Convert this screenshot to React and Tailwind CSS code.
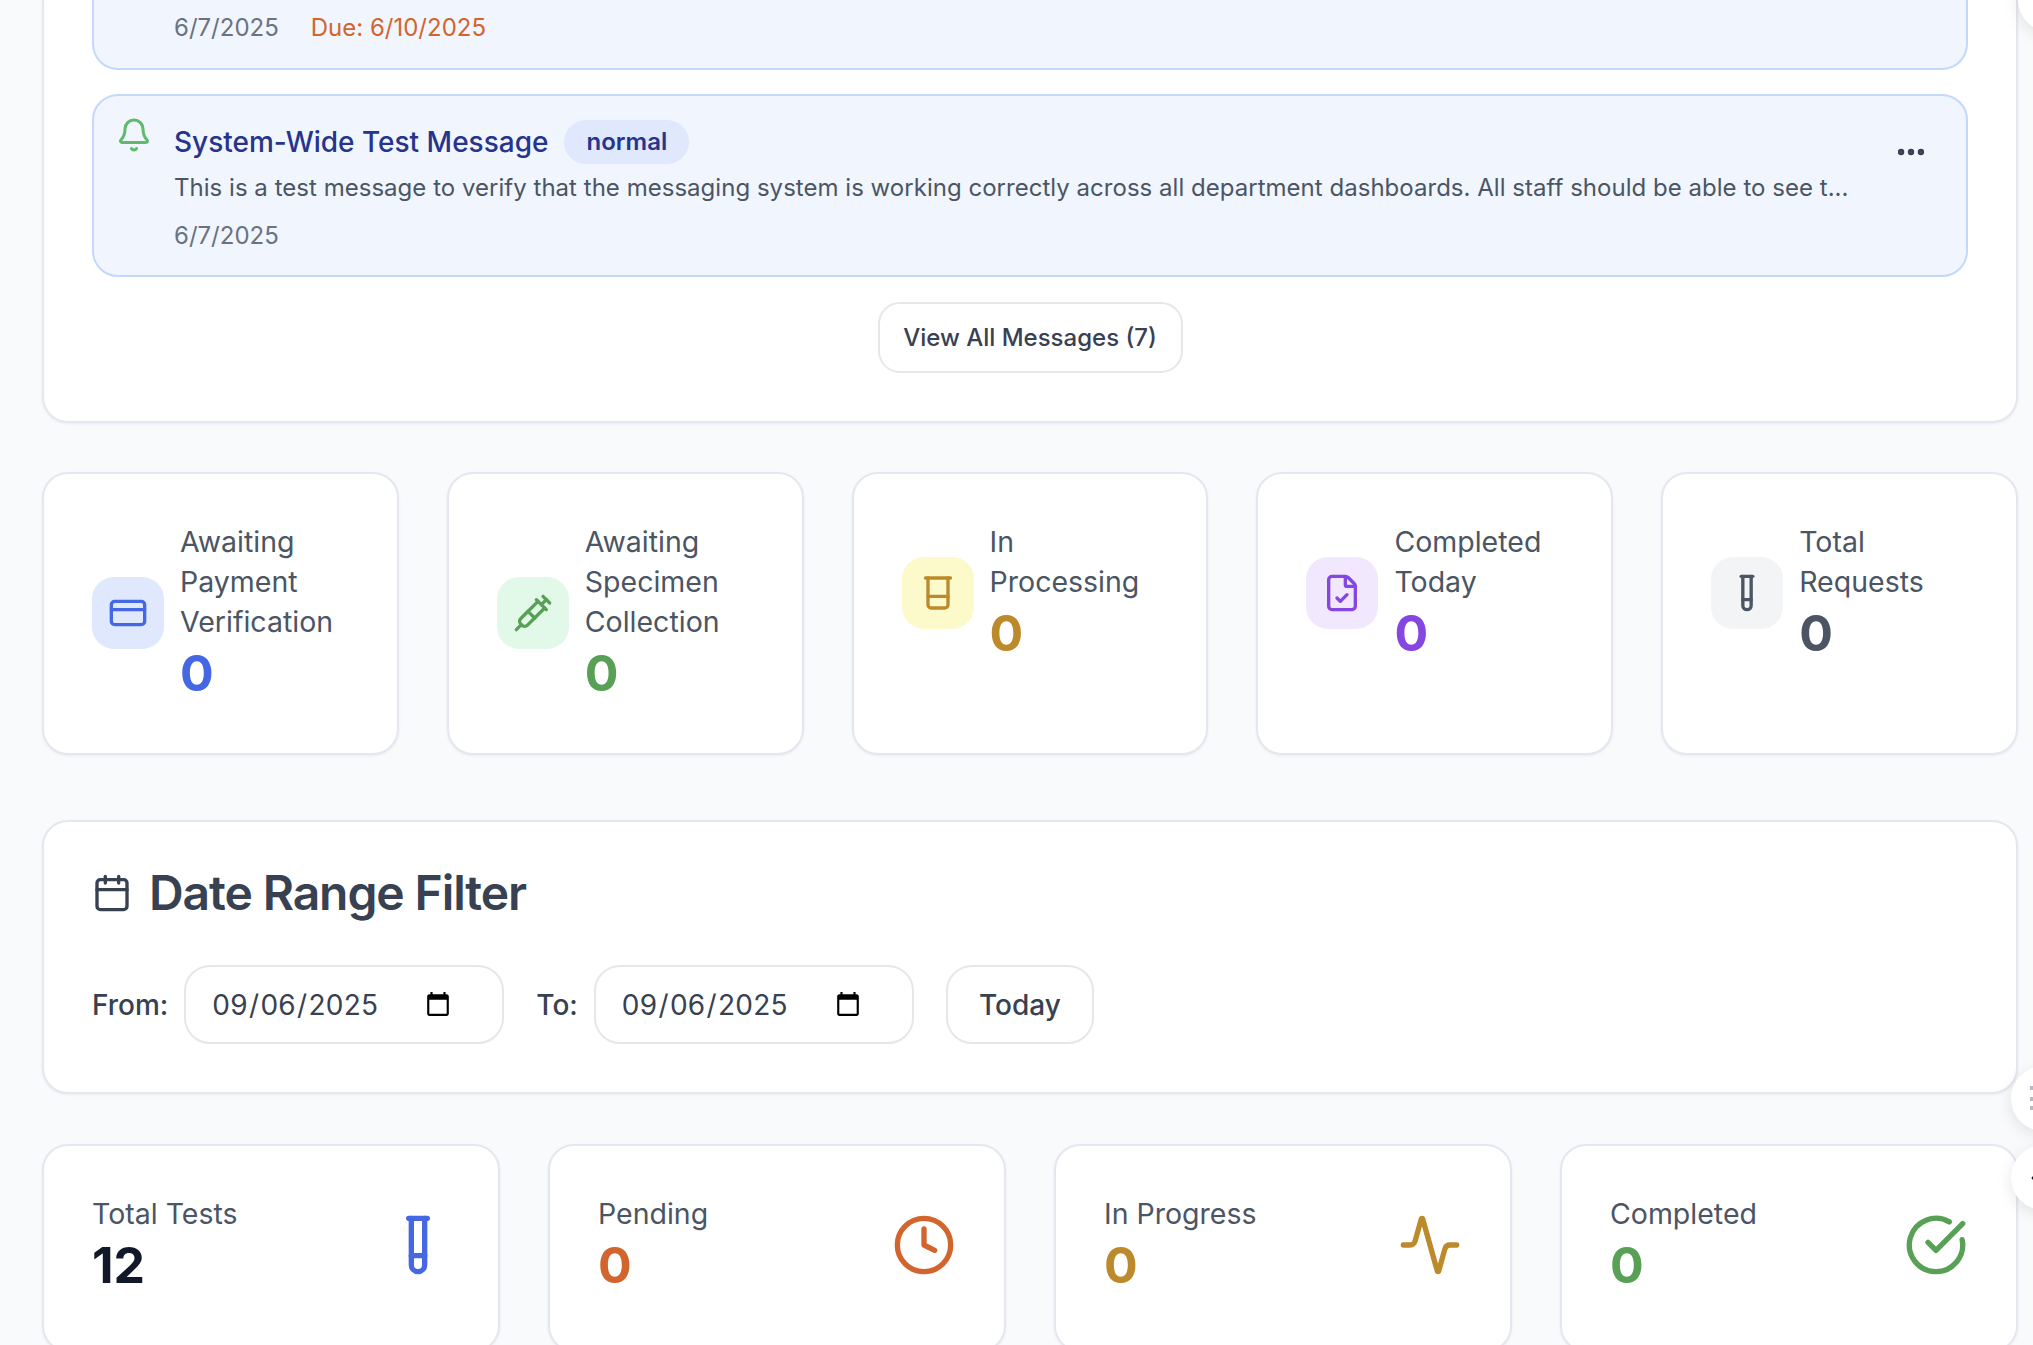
import React from "react";
import { Bell, Ellipsis, CreditCard, Syringe, Beaker, FileCheck, TestTube, Calendar, Clock, Activity, CircleCheckBig, ArrowLeft } from "lucide-react";

const font = { fontFamily: "Inter, sans-serif" };

const stats = [
  { label: ["Awaiting", "Payment", "Verification"], Icon: CreditCard, bg: "bg-[#dfe8fc]", color: "text-[#4667e4]" },
  { label: ["Awaiting", "Specimen", "Collection"], Icon: Syringe, bg: "bg-[#e2f8e8]", color: "text-[#57a055]" },
  { label: ["In", "Processing"], Icon: Beaker, bg: "bg-[#fcf9ca]", color: "text-[#bd8a2b]" },
  { label: ["Completed", "Today"], Icon: FileCheck, bg: "bg-[#f1e8fd]", color: "text-[#8646e2]" },
  { label: ["Total", "Requests"], Icon: TestTube, bg: "bg-[#f3f4f6]", color: "text-[#4b5563]" },
];

const tiles = [
  { label: "Total Tests", value: "12", Icon: TestTube, valueColor: "text-[#111827]", color: "text-[#4667e4]" },
  { label: "Pending", value: "0", Icon: Clock, valueColor: "text-[#d2652d]", color: "text-[#d2652d]" },
  { label: "In Progress", value: "0", Icon: Activity, valueColor: "text-[#bd8a2b]", color: "text-[#bd8a2b]" },
  { label: "Completed", value: "0", Icon: CircleCheckBig, valueColor: "text-[#57a055]", color: "text-[#57a055]" },
];

const card = "bg-white border-2 border-[#e5e7f0] rounded-[26px] shadow-[0_1px_3px_rgba(0,0,0,0.06)]";
const fab = "absolute w-[65px] h-[65px] rounded-full bg-white shadow-[0_4px_16px_rgba(0,0,0,0.1)] flex items-center";

function DateInput() {
  return (
    <input
      type="date"
      defaultValue="2025-09-06"
      className="w-[320px] h-[79px] rounded-[26px] border-2 border-[#e5e7eb] bg-white pl-[25px] pr-[48px] text-[28px] tracking-[0.3px] text-[#374151] outline-none"
    />
  );
}

export default function App() {
  return (
    <div style={font} className="relative h-[1345px] overflow-hidden bg-[#f9fafc] pl-[42px] pr-[15px]">
      <section className={`${card} border-t-0 rounded-t-none px-[48px] pb-[48px] h-[423px]`}>
        <div className="h-[70px] rounded-b-[26px] border-2 border-t-0 border-[#c3d8fb] bg-[#f0f5fe] pl-[80px] flex items-start pt-[10px] gap-[32px] text-[24px] leading-[36px]">
          <span className="text-[#6b7280]">6/7/2025</span>
          <span className="text-[#d2652d]">Due: 6/10/2025</span>
        </div>
        <div className="mt-[24px] h-[183px] rounded-[26px] border-2 border-[#c3d8fb] bg-[#f0f5fe] flex pl-[22px] pr-[38px] pt-[21px] gap-[22px]">
          <Bell className="w-[36px] h-[36px] text-[#5fbb6b] shrink-0" strokeWidth={2} />
          <div className="flex-1 min-w-0 pt-[3px]">
            <div className="flex items-center gap-[16px] h-[44px]">
              <span className="text-[28px] font-medium text-[#27348b]">System-Wide Test Message</span>
              <span className="rounded-full bg-[#dfe8fc] px-[22px] h-[44px] flex items-center text-[24px] font-semibold text-[#27348b]">normal</span>
            </div>
            <p className="mt-[4px] text-[24px] tracking-[0.026px] leading-[40px] text-[#4b5563] whitespace-nowrap">
              This is a test message to verify that the messaging system is working correctly across all department dashboards. All staff should be able to see t...
            </p>
            <p className="mt-[10px] text-[24px] leading-[36px] text-[#6b7280]">6/7/2025</p>
          </div>
          <Ellipsis className="w-[34px] h-[34px] text-[#374151] shrink-0 mt-[18px]" strokeWidth={2.5} />
        </div>
        <div className="flex justify-center mt-[25px]">
          <button className="h-[71px] w-[305px] rounded-[22px] border-2 border-[#e5e7eb] bg-white text-[24px] font-medium text-[#374151]">
            View All Messages (7)
          </button>
        </div>
      </section>

      <div className="grid grid-cols-5 gap-[48px] mt-[49px]">
        {stats.map(({ label, Icon, bg, color }) => (
          <div key={label.join()} className={`${card} h-[283px] p-[48px]`}>
            <div className="flex items-center gap-[16px]">
              <div className={`w-[72px] h-[72px] rounded-[22px] flex items-center justify-center shrink-0 ${bg}`}>
                <Icon className={`w-[40px] h-[40px] ${color}`} strokeWidth={2} />
              </div>
              <div>
                <div className="text-[28.5px] leading-[40px] text-[#4b5563]">
                  {label.map((l) => <div key={l}>{l}</div>)}
                </div>
                <div className={`text-[50px] leading-[62px] font-bold ${color}`}>0</div>
              </div>
            </div>
          </div>
        ))}
      </div>

      <section className={`${card} mt-[65px] h-[274px] px-[48px] pt-[44px]`}>
        <div className="flex items-center gap-[17px] h-[54px]">
          <Calendar className="w-[40px] h-[40px] text-[#374151]" strokeWidth={2} />
          <h2 className="text-[48px] font-semibold tracking-[-1.1px] text-[#374151]">Date Range Filter</h2>
        </div>
        <div className="flex items-center mt-[45px]">
          <label className="text-[28px] font-medium text-[#374151] mr-[16px]">From:</label>
          <DateInput />
          <label className="text-[28px] font-medium text-[#374151] ml-[32px] mr-[16px]">To:</label>
          <DateInput />
          <button className="ml-[32px] w-[148px] h-[79px] rounded-[26px] border-2 border-[#e5e7eb] bg-white text-[28px] font-medium text-[#374151]">Today</button>
        </div>
      </section>

      <div className="grid grid-cols-4 gap-[48px] mt-[50px]">
        {tiles.map(({ label, value, Icon, valueColor, color }) => (
          <div key={label} className={`${card} h-[208px] pt-[48px] pb-[54px] px-[48px] flex items-center justify-between`}>
            <div>
              <div className="text-[28.5px] leading-[40px] text-[#4b5563]">{label}</div>
              <div className={`text-[50px] leading-[62px] font-bold ${valueColor}`}>{value}</div>
            </div>
            <Icon className={`w-[64px] h-[64px] ${color}`} strokeWidth={2} />
          </div>
        ))}
      </div>

      <div className={`${fab} left-[2018px] -top-[33px]`} />
      <div className={`${fab} left-[2011px] top-[1066px] pl-[19px]`}>
        <svg width="4" height="26" viewBox="0 0 4 26" className="text-[#b5bac3]" fill="currentColor">
          <rect x="0" y="0" width="4" height="4" />
          <rect x="0" y="11" width="4" height="4" />
          <rect x="0" y="20" width="4" height="4" />
        </svg>
      </div>
      <div className={`${fab} left-[2011px] top-[1145px] pl-[17px]`}>
        <ArrowLeft className="w-[24px] h-[24px] text-[#111827] shrink-0" strokeWidth={2.5} />
      </div>
    </div>
  );
}
